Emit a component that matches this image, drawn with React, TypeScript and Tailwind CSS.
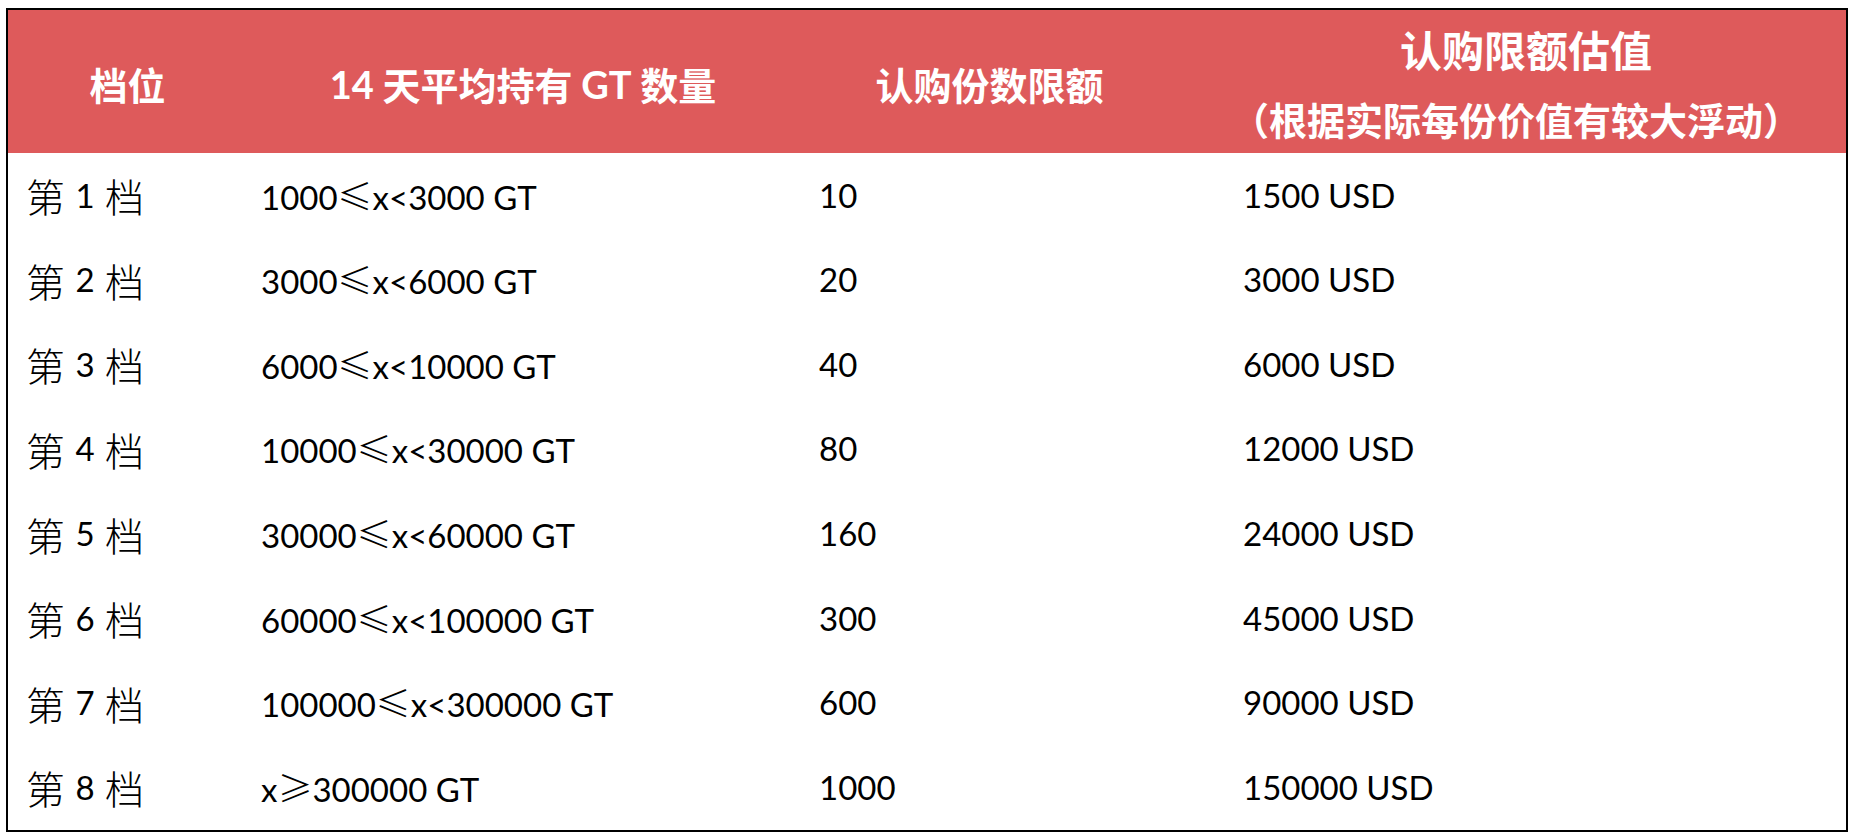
import React from "react";

const rows: [string, string, string, string][] = [
  ["1", "1000≤x<3000 GT", "10", "1500 USD"],
  ["2", "3000≤x<6000 GT", "20", "3000 USD"],
  ["3", "6000≤x<10000 GT", "40", "6000 USD"],
  ["4", "10000≤x<30000 GT", "80", "12000 USD"],
  ["5", "30000≤x<60000 GT", "160", "24000 USD"],
  ["6", "60000≤x<100000 GT", "300", "45000 USD"],
  ["7", "100000≤x<300000 GT", "600", "90000 USD"],
  ["8", "x≥300000 GT", "1000", "150000 USD"],
];

function Rel({ s }: { s: string }) {
  const parts = s.split(/([≤≥])/);
  return (
    <>
      {parts.map((p, i) =>
        p === "≤" || p === "≥" ? (
          <span key={i} className="font-['Noto_Sans_CJK_SC',sans-serif] font-light text-[35px]">
            {p}
          </span>
        ) : (
          <span key={i}>{p}</span>
        )
      )}
    </>
  );
}

export default function App() {
  return (
    <div className="w-[1853px] h-[840px] bg-white pt-[8px] pl-[6px]">
      <div className="w-[1842px] h-[824px] border-2 border-black flex flex-col font-['Lato','Noto_Sans_CJK_SC',sans-serif] text-black">
        <div className="h-[143px] bg-[#de5a5b] grid grid-cols-[239px_552px_391px_652px] pt-[4px] text-white font-bold text-[38px] leading-[70px]">
          <div className="flex items-center justify-center">
            <span className="font-['Noto_Sans_CJK_SC',sans-serif]">档位</span>
          </div>
          <div className="flex items-center justify-center">
            <span>14</span>
            <span className="font-['Noto_Sans_CJK_SC',sans-serif]">&nbsp;天平均持有&nbsp;</span>
            <span>GT</span>
            <span className="font-['Noto_Sans_CJK_SC',sans-serif]">&nbsp;数量</span>
          </div>
          <div className="flex items-center justify-center pr-[10px]">
            <span className="font-['Noto_Sans_CJK_SC',sans-serif]">认购份数限额</span>
          </div>
          <div className="flex flex-col items-center justify-center font-['Noto_Sans_CJK_SC',sans-serif]">
            <span className="pl-[20px] text-[42px]">认购限额估值</span>
            <span>（根据实际每份价值有较大浮动）</span>
          </div>
        </div>
        <div className="flex-1 grid grid-rows-8">
          {rows.map((r) => (
            <div key={r[0]} className="grid grid-cols-[239px_552px_391px_652px] text-[33px] items-center">
              <div className="pl-[18px] flex items-center">
                <span className="font-['Noto_Sans_CJK_SC',sans-serif] font-light text-[39px]">第</span>
                <span className="px-[2px]">&nbsp;{r[0]}&nbsp;</span>
                <span className="font-['Noto_Sans_CJK_SC',sans-serif] font-light text-[39px]">档</span>
              </div>
              <div className="pl-[14px]">
                <Rel s={r[1]} />
              </div>
              <div className="pl-[20px]">{r[2]}</div>
              <div className="pl-[53px]">{r[3]}</div>
            </div>
          ))}
        </div>
      </div>
    </div>
  );
}
